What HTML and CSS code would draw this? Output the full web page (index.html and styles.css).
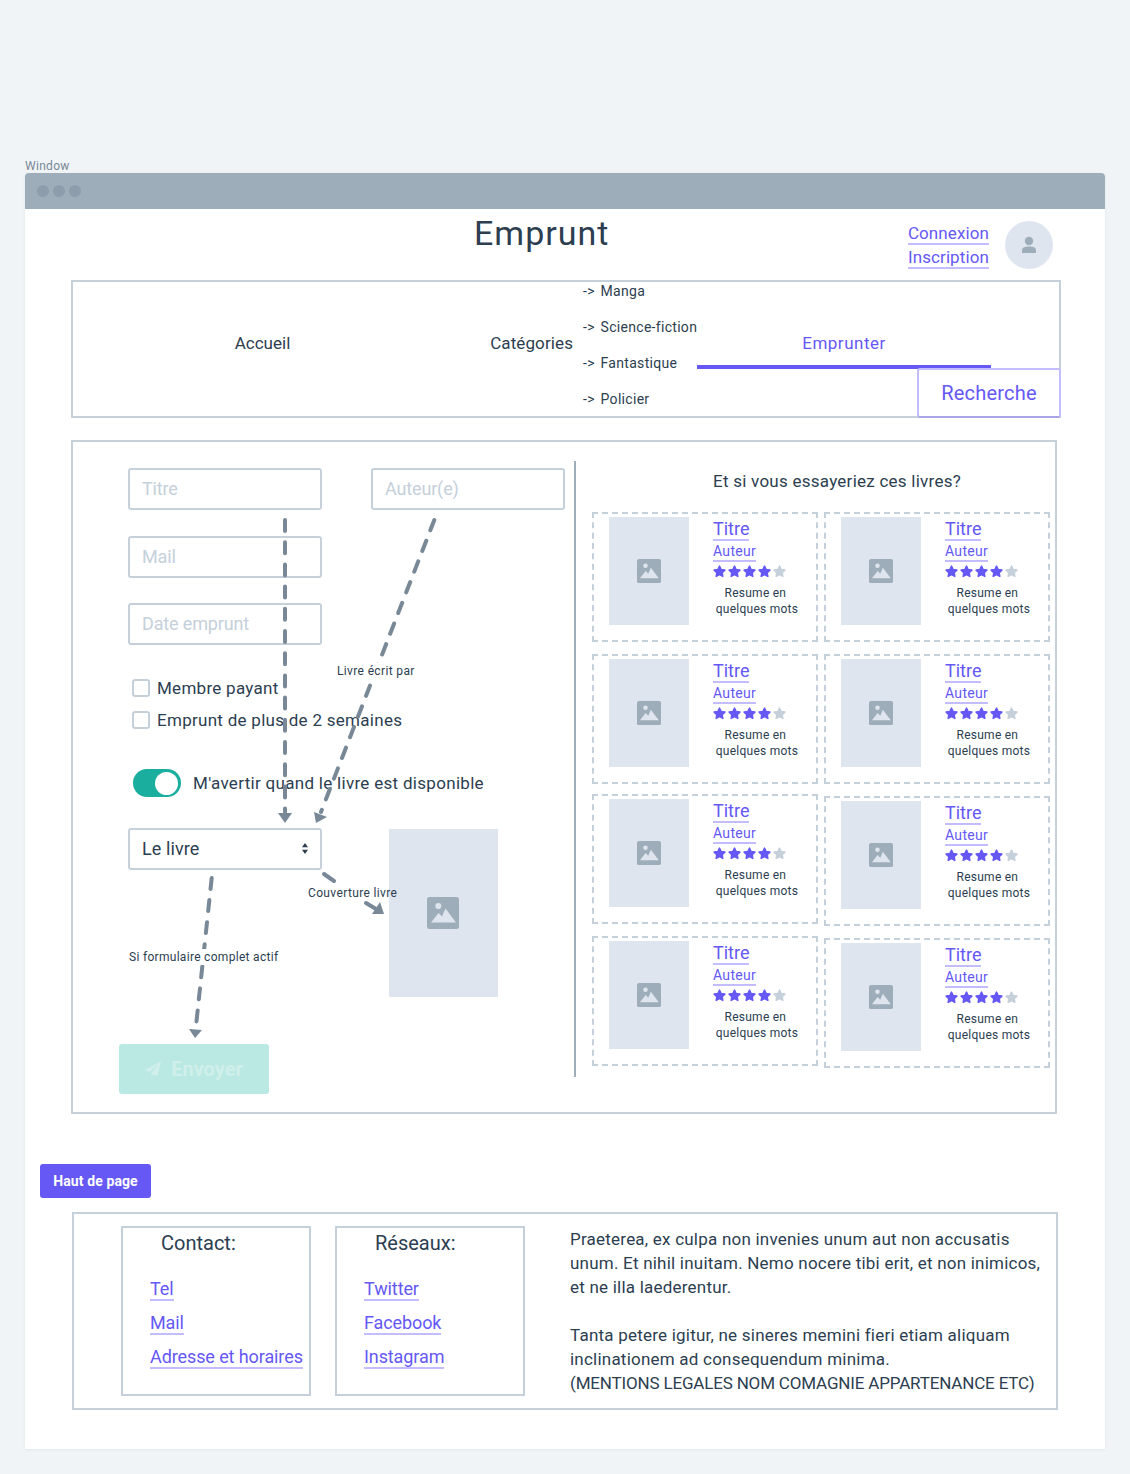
FILE: index.html
```html
<!DOCTYPE html>
<html lang="fr">
<head>
    <meta charset="UTF-8">
    <title>Emprunt</title>
    <link rel="stylesheet" href="styles.css">
</head>
<body>
<svg class="defs" width="0" height="0">
    <symbol id="icoImage" viewBox="0 0 32 32">
        <rect width="32" height="32" rx="2.5" fill="#9eadba"/>
        <circle cx="11.3" cy="9" r="3" fill="#dfe5ee"/>
        <path d="M4 25.5L11.5 16L15 19.5L18.5 11.5L29 25.5Z" fill="#dfe5ee"/>
    </symbol>
    <symbol id="icoStar" viewBox="0 0 14 14">
        <path d="M7 1.2L8.8 4.9L12.8 5.5L9.9 8.3L10.6 12.3L7 10.4L3.4 12.3L4.1 8.3L1.2 5.5L5.2 4.9Z" stroke-width="1.6" stroke-linejoin="round"/>
    </symbol>
</svg>

<div class="wintitle">Window</div>
<div class="window">
    <div class="winbar"><i></i><i></i><i></i></div>

    <div class="head">
        <h1>Emprunt</h1>
        <div class="userlinks">
            <a href="#">Connexion</a>
            <a href="#">Inscription</a>
        </div>
        <div class="avatar">
            <svg width="16" height="18" viewBox="0 0 16 18"><circle cx="8" cy="5" r="4.2"/><path d="M1 17V14C1 11.5 4 10.5 8 10.5C12 10.5 15 11.5 15 14V17Z"/></svg>
        </div>
    </div>

    <div class="nav">
        <div class="tab tab-home">Accueil</div>
        <div class="tab tab-cat">Catégories</div>
        <ul class="catlist">
            <li>-&gt; Manga</li>
            <li>-&gt; Science-fiction</li>
            <li>-&gt; Fantastique</li>
            <li>-&gt; Policier</li>
        </ul>
        <div class="tab tab-active">Emprunter</div>
        <button class="btsearch">Recherche</button>
    </div>

    <div class="main">
        <div class="form">
            <div class="row">
                <input class="field" placeholder="Titre">
                <input class="field" placeholder="Auteur(e)">
            </div>
            <input class="field field-mail" placeholder="Mail">
            <input class="field field-date" placeholder="Date emprunt">

            <label class="check check-first"><span class="box"></span>Membre payant</label>
            <label class="check"><span class="box"></span>Emprunt de plus de 2 semaines</label>

            <div class="toggle-row"><span class="toggle"><i></i></span>M'avertir quand le livre est disponible</div>

            <div class="book-row">
                <div class="field select"><span>Le livre</span>
                    <svg width="6" height="11" viewBox="0 0 6 11"><path d="M3 0L6 4.2H0ZM3 11L0 6.8H6Z"/></svg>
                </div>
                <div class="cover"><svg width="32" height="32"><use href="#icoImage"/></svg></div>
            </div>

            <button class="btsend">
                <svg width="16" height="16" viewBox="0 0 16 16"><path d="M16 0L0 9.2L4.4 11L13.6 3L6.4 12V16L9 13.4L12.6 15Z"/></svg>
                Envoyer
            </button>
        </div>

        <div class="divider"></div>

        <div class="suggest">
            <div class="suggest-title">Et si vous essayeriez ces livres?</div>
            <div class="cards">
                <div class="col">
                    <div class="card">
                        <div class="thumb"><svg width="24" height="24"><use href="#icoImage"/></svg></div>
                        <div class="info">
                            <a class="t" href="#">Titre</a>
                            <a class="a" href="#">Auteur</a>
                            <div class="stars"><svg><use href="#icoStar"/></svg><svg><use href="#icoStar"/></svg><svg><use href="#icoStar"/></svg><svg><use href="#icoStar"/></svg><svg class="off"><use href="#icoStar"/></svg></div>
                            <div class="resume">Resume en&nbsp;<br>quelques mots</div>
                        </div>
                    </div>
                    <div class="card">
                        <div class="thumb"><svg width="24" height="24"><use href="#icoImage"/></svg></div>
                        <div class="info">
                            <a class="t" href="#">Titre</a>
                            <a class="a" href="#">Auteur</a>
                            <div class="stars"><svg><use href="#icoStar"/></svg><svg><use href="#icoStar"/></svg><svg><use href="#icoStar"/></svg><svg><use href="#icoStar"/></svg><svg class="off"><use href="#icoStar"/></svg></div>
                            <div class="resume">Resume en&nbsp;<br>quelques mots</div>
                        </div>
                    </div>
                    <div class="card card-up">
                        <div class="thumb"><svg width="24" height="24"><use href="#icoImage"/></svg></div>
                        <div class="info">
                            <a class="t" href="#">Titre</a>
                            <a class="a" href="#">Auteur</a>
                            <div class="stars"><svg><use href="#icoStar"/></svg><svg><use href="#icoStar"/></svg><svg><use href="#icoStar"/></svg><svg><use href="#icoStar"/></svg><svg class="off"><use href="#icoStar"/></svg></div>
                            <div class="resume">Resume en&nbsp;<br>quelques mots</div>
                        </div>
                    </div>
                    <div class="card">
                        <div class="thumb"><svg width="24" height="24"><use href="#icoImage"/></svg></div>
                        <div class="info">
                            <a class="t" href="#">Titre</a>
                            <a class="a" href="#">Auteur</a>
                            <div class="stars"><svg><use href="#icoStar"/></svg><svg><use href="#icoStar"/></svg><svg><use href="#icoStar"/></svg><svg><use href="#icoStar"/></svg><svg class="off"><use href="#icoStar"/></svg></div>
                            <div class="resume">Resume en&nbsp;<br>quelques mots</div>
                        </div>
                    </div>
                </div>
                <div class="col">
                    <div class="card">
                        <div class="thumb"><svg width="24" height="24"><use href="#icoImage"/></svg></div>
                        <div class="info">
                            <a class="t" href="#">Titre</a>
                            <a class="a" href="#">Auteur</a>
                            <div class="stars"><svg><use href="#icoStar"/></svg><svg><use href="#icoStar"/></svg><svg><use href="#icoStar"/></svg><svg><use href="#icoStar"/></svg><svg class="off"><use href="#icoStar"/></svg></div>
                            <div class="resume">Resume en&nbsp;<br>quelques mots</div>
                        </div>
                    </div>
                    <div class="card">
                        <div class="thumb"><svg width="24" height="24"><use href="#icoImage"/></svg></div>
                        <div class="info">
                            <a class="t" href="#">Titre</a>
                            <a class="a" href="#">Auteur</a>
                            <div class="stars"><svg><use href="#icoStar"/></svg><svg><use href="#icoStar"/></svg><svg><use href="#icoStar"/></svg><svg><use href="#icoStar"/></svg><svg class="off"><use href="#icoStar"/></svg></div>
                            <div class="resume">Resume en&nbsp;<br>quelques mots</div>
                        </div>
                    </div>
                    <div class="card">
                        <div class="thumb"><svg width="24" height="24"><use href="#icoImage"/></svg></div>
                        <div class="info">
                            <a class="t" href="#">Titre</a>
                            <a class="a" href="#">Auteur</a>
                            <div class="stars"><svg><use href="#icoStar"/></svg><svg><use href="#icoStar"/></svg><svg><use href="#icoStar"/></svg><svg><use href="#icoStar"/></svg><svg class="off"><use href="#icoStar"/></svg></div>
                            <div class="resume">Resume en&nbsp;<br>quelques mots</div>
                        </div>
                    </div>
                    <div class="card">
                        <div class="thumb"><svg width="24" height="24"><use href="#icoImage"/></svg></div>
                        <div class="info">
                            <a class="t" href="#">Titre</a>
                            <a class="a" href="#">Auteur</a>
                            <div class="stars"><svg><use href="#icoStar"/></svg><svg><use href="#icoStar"/></svg><svg><use href="#icoStar"/></svg><svg><use href="#icoStar"/></svg><svg class="off"><use href="#icoStar"/></svg></div>
                            <div class="resume">Resume en&nbsp;<br>quelques mots</div>
                        </div>
                    </div>
                </div>
            </div>
        </div>

        <!-- annotation arrows, drawn over the form -->
        <svg class="arrows" width="982" height="670" viewBox="73 442 982 670">
            <g class="dash">
                <path d="M285 520V812"/>
                <path d="M434.3 520L321 812"/>
                <path d="M211.7 878L196 1026"/>
            </g>
            <g class="solid">
                <path d="M324 874L334 881"/>
                <path d="M366 903L376 909"/>
            </g>
            <g class="head">
                <path d="M278 813H292L285 823Z"/>
                <path d="M327 817L314 812L316 823Z"/>
                <path d="M372 914L380 902L384 914Z"/>
                <path d="M189 1029L202 1030L195 1038Z"/>
            </g>
        </svg>
        <div class="note note-author">Livre écrit par</div>
        <div class="note note-cover">Couverture livre</div>
        <div class="note note-send">Si formulaire complet actif</div>
    </div>

    <button class="bttop">Haut de page</button>

    <div class="foot">
        <div class="footbox">
            <h3>Contact:</h3>
            <a href="#">Tel</a>
            <a href="#">Mail</a>
            <a href="#">Adresse et horaires</a>
        </div>
        <div class="footbox">
            <h3>Réseaux:</h3>
            <a href="#">Twitter</a>
            <a href="#">Facebook</a>
            <a href="#">Instagram</a>
        </div>
        <div class="foottext">
            <p>Praeterea, ex culpa non invenies unum aut non accusatis unum. Et nihil inuitam. Nemo nocere tibi erit, et non inimicos, et ne illa laederentur.</p>
            <p>Tanta petere igitur, ne sineres memini fieri etiam aliquam inclinationem ad consequendum minima.<br><span class="caps">(MENTIONS LEGALES NOM COMAGNIE APPARTENANCE ETC)</span></p>
        </div>
    </div>
</div>
</body>
</html>
```

FILE: styles.css
```css
*
{
    box-sizing: border-box;
}
body
{
    margin: 0;
    height: 1474px;
    padding: 159px 25px 0;
    background: #f0f4f7;
    color: #2c3e50;
    font-family: Roboto, "Noto Sans", sans-serif;
    font-size: 17px;
}
a
{
    color: #6558f5;
    text-decoration: none;
    border-bottom: 2px solid #c3bdff;
}
.defs
{
    display: block;
    height: 0;
}

.wintitle
{
    height: 14px;
    font-size: 12px;
    line-height: 15px;
    letter-spacing: 0.3px;
    color: #788896;
}
.window
{
    height: 1276px;
    background: white;
    border-radius: 4px 4px 0 0;
    box-shadow: 0 1px 3px rgba(120,136,150,0.12);
}
.winbar
{
    display: flex;
    gap: 4px;
    align-items: center;
    height: 36px;
    padding-left: 12px;
    background: #9eadba;
    border-radius: 4px 4px 0 0;
}
.winbar i
{
    width: 12px;
    height: 12px;
    border-radius: 50%;
    background: #8d9dab;
}

.head
{
    display: flex;
    height: 71px;
    padding: 0 52px 0 449px;
}
h1
{
    margin: 4px 0 0 0;
    font-size: 34px;
    font-weight: 400;
    line-height: 40px;
    letter-spacing: 1px;
}
.userlinks
{
    display: flex;
    flex-direction: column;
    align-items: center;
    gap: 2px;
    margin: 14px 0 0 auto;
    font-size: 17px;
    line-height: 20px;
    letter-spacing: 0.1px;
}
.avatar
{
    display: flex;
    align-items: center;
    justify-content: center;
    width: 48px;
    height: 48px;
    margin: 12px 0 0 16px;
    border-radius: 50%;
    background: #dfe5ee;
    fill: #9eadba;
}

.nav
{
    position: relative;
    display: grid;
    grid-template-columns: 379px 121px 124px 294px;
    width: 990px;
    height: 138px;
    margin-left: 46px;
    border: 2px solid #c5d0db;
}
.tab
{
    height: 87px;
    padding-top: 50px;
    line-height: 22px;
    font-size: 17px;
}
.tab-home
{
    text-align: center;
}
.tab-cat
{
    text-align: right;
    letter-spacing: 0.1px;
}
.tab-active
{
    text-align: center;
    letter-spacing: 0.5px;
    color: #6558f5;
    border-bottom: 4px solid #6558f5;
}
.catlist
{
    display: flex;
    flex-direction: column;
    gap: 18px;
    margin: 0;
    padding: 0 0 0 10px;
    list-style: none;
    font-size: 14px;
    line-height: 18px;
    letter-spacing: 0.3px;
    word-spacing: 2px;
    white-space: nowrap;
}
.btsearch
{
    position: absolute;
    right: -2px;
    bottom: -2px;
    width: 144px;
    height: 50px;
    background: white;
    border: 2px solid #c3bdff;
    border-bottom-color: #a9a4e6;
    border-radius: 3px;
    color: #6558f5;
    font: inherit;
    font-size: 20px;
    letter-spacing: 0.2px;
}

.main
{
    position: relative;
    display: flex;
    align-items: flex-start;
    width: 986px;
    height: 674px;
    margin: 22px 0 0 46px;
    border: 2px solid #c5d0db;
}
.form
{
    width: 501px;
    padding: 26px 0 0 55px;
}
.row
{
    display: flex;
    gap: 49px;
}
.field
{
    display: block;
    width: 194px;
    height: 42px;
    padding: 0 12px 2px;
    border: 2px solid #c5d0db;
    border-radius: 3px;
    background: white;
    color: #2c3e50;
    font: inherit;
    font-size: 18px;
    letter-spacing: -0.15px;
    outline: none;
}
.field::placeholder
{
    color: #c5d0db;
    opacity: 1;
}
.field-mail
{
    margin-top: 26px;
}
.field-date
{
    margin-top: 25px;
}
.check
{
    display: flex;
    align-items: center;
    gap: 7px;
    height: 32px;
    margin-left: 4px;
    letter-spacing: 0.28px;
}
.check-first
{
    margin-top: 27px;
}
.box
{
    width: 18px;
    height: 18px;
    border: 2px solid #c5d0db;
    border-radius: 3px;
}
.toggle-row
{
    display: flex;
    align-items: center;
    gap: 12px;
    height: 28px;
    margin: 33px 0 0 5px;
    letter-spacing: 0.3px;
}
.toggle
{
    display: flex;
    justify-content: flex-end;
    align-items: center;
    width: 48px;
    height: 28px;
    padding-right: 3px;
    border-radius: 14px;
    background: #1aae9f;
}
.toggle i
{
    width: 23px;
    height: 23px;
    border-radius: 50%;
    background: white;
}
.book-row
{
    display: flex;
    align-items: flex-start;
    gap: 67px;
    margin-top: 31px;
}
.select
{
    display: flex;
    align-items: center;
    justify-content: space-between;
    fill: #2c3e50;
    padding-right: 12px;
    letter-spacing: 0.1px;
}
.cover
{
    display: flex;
    align-items: center;
    justify-content: center;
    width: 109px;
    height: 168px;
    margin-top: 1px;
    padding-right: 1px;
    background: #dfe5ee;
}
.btsend
{
    display: flex;
    align-items: center;
    justify-content: center;
    gap: 10px;
    width: 150px;
    height: 50px;
    margin: 47px 0 0 -9px;
    border: 0;
    border-radius: 3px;
    background: #bae8e2;
    color: #d0efeb;
    fill: #d0efeb;
    font: inherit;
    font-size: 20px;
    font-weight: 700;
}

.divider
{
    width: 2px;
    height: 616px;
    margin-top: 19px;
    background: #9eadba;
}
.suggest
{
    padding: 28px 0 0 16px;
}
.suggest-title
{
    height: 22px;
    margin-bottom: 20px;
    padding-left: 121px;
    line-height: 22px;
    letter-spacing: 0.25px;
}
.cards
{
    display: flex;
    gap: 6px;
}
.col
{
    display: flex;
    flex-direction: column;
    gap: 12px;
}
.card
{
    display: flex;
    gap: 24px;
    width: 226px;
    height: 130px;
    padding: 3px 0 0 15px;
    border: 2px dashed #c5d0db;
}
.card-up
{
    margin-top: -2px;
}
.thumb
{
    display: flex;
    align-items: center;
    justify-content: center;
    width: 80px;
    height: 108px;
    background: #dfe5ee;
}
.info
{
    padding-top: 2px;
}
.t
{
    display: table;
    font-size: 18px;
    line-height: 20px;
}
.a
{
    display: table;
    margin-top: 1px;
    font-size: 14px;
    line-height: 18px;
    letter-spacing: 0.3px;
}
.stars
{
    display: flex;
    gap: 2px;
    height: 13px;
    margin-top: 3px;
    fill: #6558f5;
    stroke: #6558f5;
}
.stars svg
{
    width: 13px;
    height: 13px;
}
.stars .off
{
    fill: #c5d0db;
    stroke: #c5d0db;
}
.resume
{
    width: 84px;
    margin: 7px 0 0 2px;
    text-align: center;
    font-size: 12px;
    line-height: 16px;
    letter-spacing: 0.25px;
    white-space: nowrap;
}

.arrows
{
    position: absolute;
    left: 0;
    top: 0;
    overflow: visible;
    pointer-events: none;
}
.arrows path
{
    fill: none;
    stroke: #788896;
    stroke-width: 4;
    stroke-linecap: round;
}
.arrows .dash path
{
    stroke-dasharray: 11 11.2;
}
.arrows .head path
{
    fill: #788896;
    stroke: none;
}
.note
{
    position: absolute;
    padding: 0 1px;
    background: white;
    font-size: 12px;
    line-height: 16px;
    letter-spacing: 0.36px;
    white-space: nowrap;
}
.note-author
{
    left: 263px;
    top: 221px;
}
.note-cover
{
    left: 234px;
    top: 443px;
    background: none;
}
.note-send
{
    left: 55px;
    top: 507px;
    letter-spacing: 0.3px;
}

.bttop
{
    display: block;
    width: 111px;
    height: 34px;
    margin: 50px 0 0 15px;
    border: 0;
    border-radius: 3px;
    background: #6558f5;
    color: white;
    font: inherit;
    font-size: 14px;
    font-weight: 700;
    letter-spacing: 0.1px;
}
.foot
{
    display: flex;
    width: 986px;
    height: 198px;
    margin: 14px 0 0 47px;
    padding: 12px 0 0 47px;
    border: 2px solid #c5d0db;
}
.footbox
{
    display: flex;
    flex-direction: column;
    align-items: flex-start;
    gap: 12px;
    width: 190px;
    height: 170px;
    margin-right: 24px;
    padding: 3px 0 0 27px;
    border: 2px solid #c5d0db;
    font-size: 18px;
    letter-spacing: -0.1px;
}
.footbox a
{
    line-height: 20px;
}
.footbox h3
{
    margin: 0 0 12px 11px;
    font-size: 20px;
    font-weight: 400;
    line-height: 24px;
    letter-spacing: 0;
}
.foottext
{
    width: 478px;
    margin: 1px 0 0 21px;
    line-height: 24px;
    letter-spacing: 0.22px;
}
.foottext p
{
    margin: 0 0 24px;
}
.caps
{
    letter-spacing: -0.17px;
}
```
